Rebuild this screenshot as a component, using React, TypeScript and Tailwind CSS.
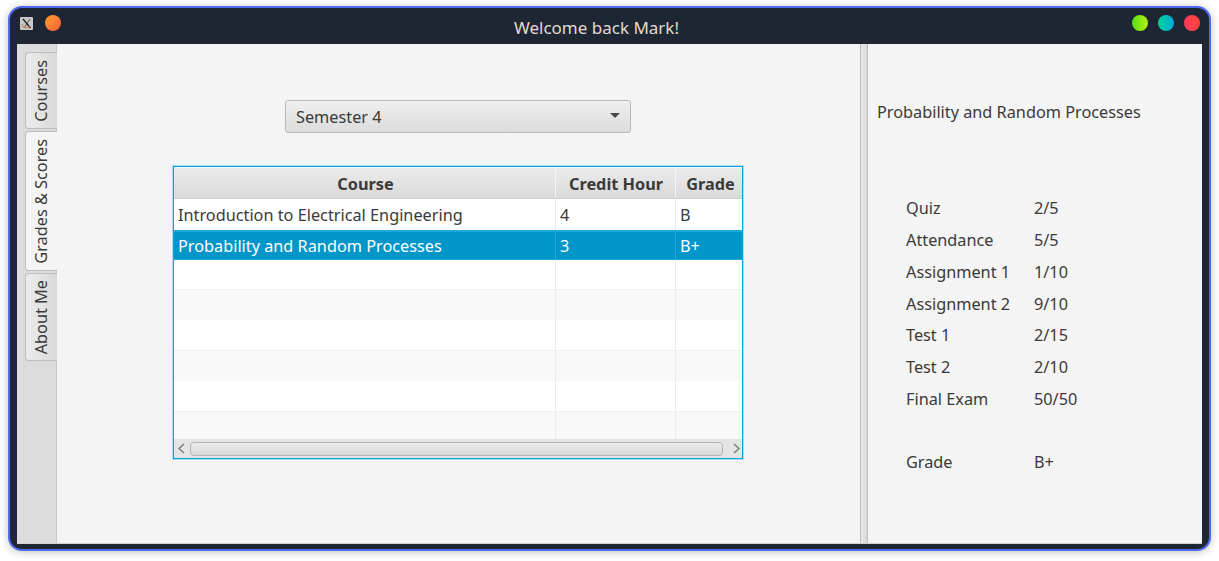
const scores = [
  ["Quiz", "2/5"],
  ["Attendance", "5/5"],
  ["Assignment 1", "1/10"],
  ["Assignment 2", "9/10"],
  ["Test 1", "2/15"],
  ["Test 2", "2/10"],
  ["Final Exam", "50/50"],
];

const tabs = [
  { label: "Courses", h: "h-[77px]", active: false },
  { label: "Grades & Scores", h: "h-[140px]", active: true },
  { label: "About Me", h: "h-[88px]", active: false },
];

function Cell({ w, children, cls = "" }: { w: string; children?: React.ReactNode; cls?: string }) {
  return <div className={`${w} h-full flex items-center border-r ${cls}`}>{children}</div>;
}

function Row({ h, bg, line, text, a, b, c }: { h: string; bg: string; line: string; text?: string; a?: string; b?: string; c?: string }) {
  return (
    <div className={`${h} ${bg} ${text ?? ""} flex shrink-0`}>
      <Cell w="w-[382px] pl-[4px]" cls={line}>{a}</Cell>
      <Cell w="w-[120px] pl-[4px]" cls={line}>{b}</Cell>
      <div className="flex-1 h-full flex items-center pl-[4px]">{c}</div>
    </div>
  );
}

function Head({ w, children, last, cls = "" }: { w: string; children: React.ReactNode; last?: boolean; cls?: string }) {
  return (
    <div className={`${w} ${cls} h-full flex items-center justify-center pt-[1px] font-bold bg-gradient-to-b from-[#ececec] to-[#d9d9d9] ${last ? "" : "border-r border-[#f4f4f4]"}`}>
      {children}
    </div>
  );
}

export default function App() {
  return (
    <div className="w-[1219px] h-[561px] bg-white pt-[6px] pl-[8px] pr-[8px] pb-[10px] font-['Noto_Sans',sans-serif] text-[16.27px] leading-[22px] text-[#3a3a3a] overflow-hidden">
      <div className="h-full rounded-[14px] border-2 border-[#4f69f0] bg-[#1f2633] shadow-[0_1px_8px_rgba(0,0,0,0.25)] flex flex-col overflow-hidden">
        <div className="h-[36px] shrink-0 relative flex items-center justify-between pl-[10px] pr-[9px] pb-[6px]">
          <div className="flex items-center gap-[12px]">
            <div className="w-[13px] h-[13px] bg-[#c8c8c8] rounded-[1px] flex items-center justify-center">
              <svg width="11" height="11" viewBox="0 0 11 11">
                <path d="M2 1 L9.5 10" stroke="#222" strokeWidth="1.4" />
                <path d="M9 1 L3 10" stroke="#333" strokeWidth="0.8" />
                <path d="M1 6 Q1 10 5 10 Q8 10 9 8" stroke="#e8703a" strokeWidth="1" fill="none" />
              </svg>
            </div>
            <div className="w-[16px] h-[16px] rounded-full bg-gradient-to-br from-[#ffa02c] to-[#f9583c]" />
          </div>
          <div className="absolute left-0 right-[26px] top-[9px] text-center text-[17px] text-[#e3d9cf] pointer-events-none">Welcome back Mark!</div>
          <div className="flex items-center gap-[10px]">
            <div className="w-[16px] h-[16px] rounded-full bg-gradient-to-r from-[#4ce018] to-[#b4f010]" />
            <div className="w-[16px] h-[16px] rounded-full bg-gradient-to-r from-[#0ad38c] to-[#05a9e0]" />
            <div className="w-[16px] h-[16px] rounded-full bg-gradient-to-r from-[#ff3b5c] to-[#ff4438]" />
          </div>
        </div>

        <div className="flex-1 min-h-0 mx-[7px] mb-[5px] flex bg-[#f4f4f4] border-b border-[#d0d0d0]">
          <div className="w-[40px] shrink-0 bg-[#dcdcdc] border-r border-[#c9c9c9] pt-[8px] pl-[8px] flex flex-col gap-[2px]">
            {tabs.map((t) => (
              <div
                key={t.label}
                className={`${t.h} w-[32px] shrink-0 flex items-center justify-center pr-[1px] rounded-l-[4px] border border-r-0 border-[#bdbdbd] ${t.active ? "bg-[#f4f4f4]" : "bg-gradient-to-r from-[#ececec] to-[#d9d9d9]"}`}
              >
                <span className="[writing-mode:vertical-rl] rotate-180 whitespace-nowrap">{t.label}</span>
              </div>
            ))}
          </div>

          <div className="w-[803px] shrink-0 flex flex-col items-start pt-[56px]">
            <div className="ml-[228px] w-[346px] h-[33px] rounded-[3px] border border-[#b8b8b8] bg-gradient-to-b from-[#efefef] to-[#dcdcdc] flex items-center justify-between pl-[10px] pr-[10px]">
              <span>Semester 4</span>
              <div className="w-0 h-0 border-x-[5px] border-x-transparent border-t-[5px] border-t-[#4a4a4a] -mt-[2px]" />
            </div>

            <div className="ml-[116px] w-[570px] h-[293px] mt-[33px] border border-[#00a5dc] shadow-[0_0_0_1px_rgba(0,165,220,0.3)] bg-white flex flex-col pt-[1px]">
              <div className="h-[31px] shrink-0 flex border-b border-[#d0d0d0]">
                <Head w="w-[382px]" cls="pl-[2px]">Course</Head>
                <Head w="w-[120px]" cls="pl-[1px]">Credit Hour</Head>
                <Head w="flex-1" cls="pl-[3px]" last>Grade</Head>
              </div>
              <Row h="h-[31px]" bg="bg-white" line="border-[#e9e9e9]" a="Introduction to Electrical Engineering" b="4" c="B" />
              <Row h="h-[30px]" bg="bg-[#0096c9] border-t-[2px] border-b-[1px] border-[#19a7dc] pt-[1px]" line="border-[#2aa8d5]" text="text-white" a="Probability and Random Processes" b="3" c="B+" />
              <Row h="h-[30px]" bg="bg-white border-b border-[#f0f0f0]" line="border-[#ececec]" />
              <Row h="h-[30px]" bg="bg-[#f9f9f9]" line="border-[#ececec]" />
              <Row h="h-[31px]" bg="bg-white border-b border-[#f0f0f0]" line="border-[#ececec]" />
              <Row h="h-[30px]" bg="bg-[#f9f9f9]" line="border-[#ececec]" />
              <Row h="h-[31px]" bg="bg-white border-b border-[#f0f0f0]" line="border-[#ececec]" />
              <Row h="h-[27px]" bg="bg-[#f9f9f9]" line="border-[#ececec]" />
              <div className="flex-1 bg-[#e4e4e4] flex items-center gap-[4px] pl-[3px] pr-[1px]">
                <svg width="9" height="11" viewBox="0 0 9 11" className="shrink-0">
                  <path d="M7 1 L2 5.5 L7 10" stroke="#777" strokeWidth="1.3" fill="none" />
                </svg>
                <div className="flex-1 h-[14px] rounded-[4px] border border-[#b5b5b5] bg-gradient-to-b from-[#ececec] to-[#dadada]" />
                <svg width="9" height="11" viewBox="0 0 9 11" className="shrink-0 ml-[5px]">
                  <path d="M2 1 L7 5.5 L2 10" stroke="#777" strokeWidth="1.3" fill="none" />
                </svg>
              </div>
            </div>
          </div>

          <div className="w-[8px] shrink-0 border-x border-[#bdbdbd] bg-gradient-to-r from-[#e6e6e6] to-[#dadada]" />

          <div className="flex-1 pl-[9px] pt-[57px]">
            <div>Probability and Random Processes</div>
            <div className="mt-[74px] pl-[29px] flex flex-col gap-y-[9.85px]">
              {scores.map(([k, v]) => (
                <div key={k} className="flex">
                  <div className="w-[128px]">{k}</div>
                  <div>{v}</div>
                </div>
              ))}
              <div className="flex mt-[31px]">
                <div className="w-[128px]">Grade</div>
                <div>B+</div>
              </div>
            </div>
          </div>
        </div>
      </div>
    </div>
  );
}
